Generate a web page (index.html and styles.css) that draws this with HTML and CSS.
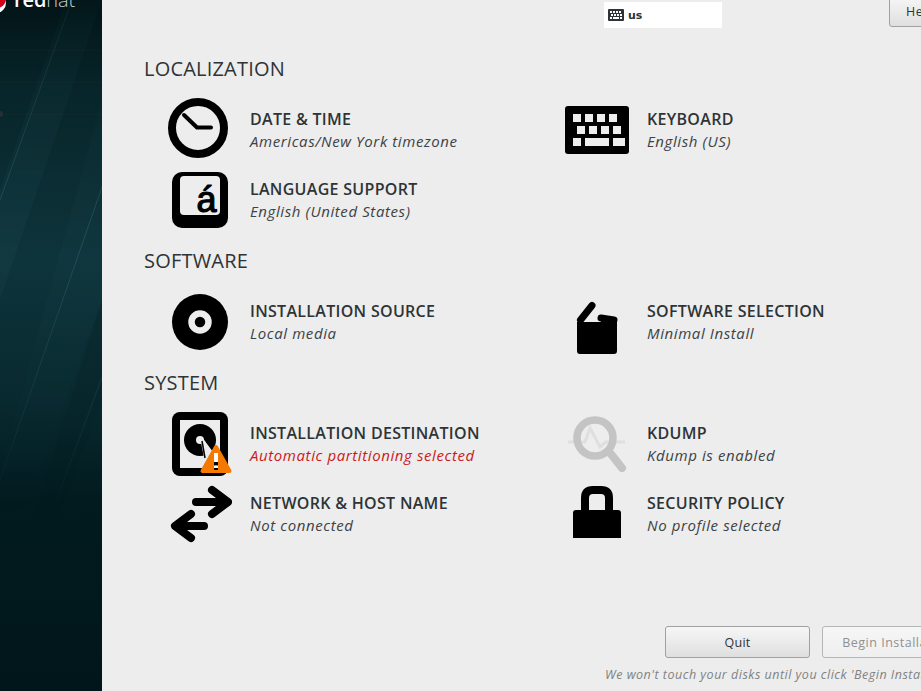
FILE: index.html
```html
<!DOCTYPE html>
<html lang="en">
<head>
<meta charset="utf-8">
<title>Installation Summary</title>
<link rel="stylesheet" href="styles.css">
</head>
<body>
<div class="app">
  <aside class="sidebar">
    <svg class="sidebar-art" width="102" height="691" viewBox="0 0 102 691">
      <defs>
        <linearGradient id="fade" x1="0" y1="0" x2="0" y2="1">
          <stop offset="0" stop-color="#fff" stop-opacity="0.35"/>
          <stop offset="0.35" stop-color="#fff" stop-opacity="1"/>
          <stop offset="0.75" stop-color="#fff" stop-opacity="0"/>
        </linearGradient>
        <mask id="fm"><rect width="102" height="691" fill="url(#fade)"/></mask>
      </defs>
      <g mask="url(#fm)">
        <polygon points="102,0 66,0 0,190 0,300" fill="#2a5a62" opacity="0.14"/>
        <polygon points="102,100 102,300 30,500 0,520 0,470" fill="#2a5a62" opacity="0.09"/>
        <polygon points="102,300 102,400 50,540 20,560" fill="#000" opacity="0.12"/>
        <line x1="72" y1="0" x2="0" y2="200" stroke="#2f6a74" stroke-opacity=".5"/>
        <line x1="102" y1="187" x2="0" y2="480" stroke="#2f6a74" stroke-opacity=".5"/>
        <line x1="102" y1="377" x2="40" y2="545" stroke="#2f6a74" stroke-opacity=".5"/>
        <line x1="102" y1="475" x2="80" y2="535" stroke="#2f6a74" stroke-opacity=".4"/>
      </g>
      <g stroke="#5a3f3f" stroke-opacity=".1">
        <line x1="0" y1="50.500" x2="102" y2="50.500"/>
        <line x1="0" y1="82.500" x2="102" y2="82.500"/>
        <line x1="0" y1="114.500" x2="102" y2="114.500"/>
      </g>
      <circle cx="0" cy="114" r="3" fill="#5a4a4a" opacity=".3"/>
      <circle cx="-4" cy="3" r="10" fill="#fff"/>
      <circle cx="-3" cy="-1" r="9" fill="#d4001a"/>
    </svg>
    <div class="brand"><b class="brand-red">red</b><span class="brand-hat">hat</span></div>
  </aside>

  <main class="main">
    <header class="topbar">
      <div class="layout-indicator">
        <svg class="layout-icon" width="16" height="12" viewBox="0 0 16 12">
          <rect width="16" height="12" rx="1" fill="#2e3436"/>
          <g fill="#fff"><rect x="2" y="2" width="2" height="2"/><rect x="5" y="2" width="2" height="2"/><rect x="8" y="2" width="2" height="2"/><rect x="11" y="2" width="2" height="2"/><rect x="3" y="5" width="2" height="2"/><rect x="6" y="5" width="2" height="2"/><rect x="9" y="5" width="2" height="2"/><rect x="12" y="5" width="2" height="2"/><rect x="2" y="8" width="2" height="2"/><rect x="5" y="8" width="6" height="2"/><rect x="12" y="8" width="2" height="2"/></g>
        </svg>
        <span>us</span>
      </div>
      <button class="btn help-btn">Help!</button>
    </header>

    <section>
      <h2 class="section-title">LOCALIZATION</h2>
      <div class="spokes">
        <div class="spoke">
          <svg class="icon" viewBox="0 0 64 64"><circle cx="30" cy="30" r="26" fill="none" stroke="#000" stroke-width="8"/><path d="M16 17 29 29.500H43" fill="none" stroke="#000" stroke-width="4" stroke-linecap="round" stroke-linejoin="round"/></svg>
          <div class="spoke-text"><div class="spoke-title">DATE &amp; TIME</div><div class="spoke-status">Americas/New York timezone</div></div>
        </div>
        <div class="spoke">
          <svg class="icon" viewBox="0 0 64 64"><rect x="0" y="8" width="64" height="48" rx="3" fill="#000"/><g fill="#ededed"><rect x="8" y="16" width="8" height="8"/><rect x="20" y="16" width="8" height="8"/><rect x="32" y="16" width="8" height="8"/><rect x="44" y="16" width="8" height="8"/><rect x="12" y="28" width="8" height="8"/><rect x="24" y="28" width="8" height="8"/><rect x="36" y="28" width="8" height="8"/><rect x="48" y="28" width="8" height="8"/><rect x="8" y="40" width="8" height="8"/><rect x="20" y="40" width="24" height="8"/><rect x="48" y="40" width="12" height="8"/></g></svg>
          <div class="spoke-text"><div class="spoke-title">KEYBOARD</div><div class="spoke-status">English (US)</div></div>
        </div>
        <div class="spoke">
          <svg class="icon" viewBox="0 0 64 64"><rect x="4" y="4" width="56" height="56" rx="10" fill="#000"/><rect x="12" y="8" width="40" height="39" rx="4" fill="#ededed"/><text class="glyph" x="38.500" y="44" text-anchor="middle">á</text></svg>
          <div class="spoke-text"><div class="spoke-title">LANGUAGE SUPPORT</div><div class="spoke-status">English (United States)</div></div>
        </div>
      </div>
    </section>

    <section>
      <h2 class="section-title">SOFTWARE</h2>
      <div class="spokes">
        <div class="spoke">
          <svg class="icon" viewBox="0 0 64 64"><circle cx="32" cy="32" r="28" fill="#000"/><circle cx="32" cy="32" r="8.500" fill="none" stroke="#ededed" stroke-width="6.500"/></svg>
          <div class="spoke-text"><div class="spoke-title">INSTALLATION SOURCE</div><div class="spoke-status">Local media</div></div>
        </div>
        <div class="spoke">
          <svg class="icon" viewBox="0 0 64 64"><path d="M12 32H36V27L50 28Q52 28.500 52 31V61Q52 64 49 64H15Q12 64 12 61Z" fill="#000"/><path d="M15.500 30 27 15.500" fill="none" stroke="#000" stroke-width="7" stroke-linecap="round"/><path d="M36 28 49 30" fill="none" stroke="#000" stroke-width="7" stroke-linecap="round"/></svg>
          <div class="spoke-text"><div class="spoke-title">SOFTWARE SELECTION</div><div class="spoke-status">Minimal Install</div></div>
        </div>
      </div>
    </section>

    <section>
      <h2 class="section-title">SYSTEM</h2>
      <div class="spokes">
        <div class="spoke">
          <svg class="icon" viewBox="0 0 64 64">
            <rect x="4" y="0" width="56" height="64" rx="8" fill="#000"/>
            <rect x="12" y="8" width="40" height="48" fill="#ededed"/>
            <circle cx="32" cy="28" r="16" fill="#000"/>
            <path d="M32 25 36 46 45 40 34 25Z" fill="#ededed"/>
            <circle cx="32" cy="28" r="4" fill="#ededed"/>
            <path d="M34 29 37 46" stroke="#000" stroke-width="1.500"/>
            <path d="M48 35 34.500 59H61.500Z" fill="#f57900" stroke="#f57900" stroke-width="4" stroke-linejoin="round"/>
            <rect x="46" y="41" width="4" height="9" fill="#fff"/>
            <rect x="46" y="50" width="4" height="3" fill="#000"/>
            <rect x="46" y="54" width="4" height="2" fill="#fff"/>
            <rect x="46" y="56" width="4" height="2" fill="#000"/>
          </svg>
          <div class="spoke-text"><div class="spoke-title">INSTALLATION DESTINATION</div><div class="spoke-status warn">Automatic partitioning selected</div></div>
        </div>
        <div class="spoke">
          <svg class="icon" viewBox="0 0 64 64"><path d="M3 30H20L25 16 35 35 41 30H60" fill="none" stroke="#dfdfdf" stroke-width="3"/><circle cx="30" cy="26" r="18" fill="none" stroke="#c4c4c4" stroke-width="7.500"/><path d="M46 42 57 56" fill="none" stroke="#c4c4c4" stroke-width="8" stroke-linecap="round"/></svg>
          <div class="spoke-text"><div class="spoke-title">KDUMP</div><div class="spoke-status">Kdump is enabled</div></div>
        </div>
        <div class="spoke">
          <svg class="icon" viewBox="0 0 64 64"><g fill="none" stroke="#000" stroke-width="8" stroke-linecap="round" stroke-linejoin="round"><path d="M28 20H59"/><path d="M44 8 60 20 44 32"/><path d="M36 44H9"/><path d="M23 32 7 44 23 56"/></g></svg>
          <div class="spoke-text"><div class="spoke-title">NETWORK &amp; HOST NAME</div><div class="spoke-status">Not connected</div></div>
        </div>
        <div class="spoke">
          <svg class="icon" viewBox="0 0 64 64"><path d="M20 30V16Q20 8 28 8H36Q44 8 44 16V30" fill="none" stroke="#000" stroke-width="8"/><path d="M11 28H53Q56 28 56 31V56H8V31Q8 28 11 28Z" fill="#000"/></svg>
          <div class="spoke-text"><div class="spoke-title">SECURITY POLICY</div><div class="spoke-status">No profile selected</div></div>
        </div>
      </div>
    </section>

    <footer class="footer">
      <div class="actions">
        <button class="btn quit-btn">Quit</button>
        <button class="btn begin-btn" disabled>Begin Installation</button>
      </div>
      <p class="note">We won't touch your disks until you click 'Begin Installation'.</p>
    </footer>
  </main>
</div>
</body>
</html>
```

FILE: styles.css
```css
* { box-sizing: border-box; }

html, body {
  margin: 0;
  height: 691px;
  overflow: hidden;
  background: #ededed;
}

.app {
  display: flex;
  width: 921px;
  height: 691px;
  overflow: hidden;
  font-family: "Open Sans", "Noto Sans", sans-serif;
  color: #2e3436;
}

.sidebar {
  flex: 0 0 102px;
  position: relative;
  overflow: hidden;
  background: linear-gradient(180deg, #021417 0, #07252a 90px, #0e343b 260px, #08292f 400px, #021b1f 500px, #01161a 691px);
}

.sidebar-art { position: absolute; left: 0; top: 0; }

.brand {
  position: absolute;
  left: 14px;
  top: -20px;
  font-family: "Open Sans", sans-serif;
  font-size: 20px;
  line-height: 40px;
  letter-spacing: -0.1px;
  white-space: nowrap;
}

.brand-red { font-weight: 600; color: #fff; }
.brand-hat { font-weight: 300; color: #c4cccd; }

.main {
  flex: 1 1 auto;
  min-width: 0;
  display: flex;
  flex-direction: column;
}

.topbar {
  height: 43px;
  display: flex;
  align-items: flex-start;
  padding-left: 502px;
}

.layout-indicator {
  flex: none;
  margin-top: 2px;
  width: 118px;
  height: 26px;
  display: flex;
  align-items: center;
  gap: 4px;
  padding-left: 4px;
  background: #fff;
  font-family: "DejaVu Sans", sans-serif;
  font-size: 11px;
  font-weight: 700;
  color: #2e3436;
}

.layout-icon { flex: none; }

.btn {
  font-family: "Open Sans", sans-serif;
  font-size: 12.500px;
  color: #2e3436;
  border: 1px solid #a1a1a1;
  border-radius: 3px;
  background: linear-gradient(180deg, #f6f6f6, #dfdfdf);
  padding: 0;
}

.help-btn {
  flex: none;
  width: 60px;
  height: 31px;
  margin: -4px 0 0 167px;
  text-align: left;
  padding-left: 16px;
  letter-spacing: .6px;
}

.section-title {
  margin: 0;
  height: 52px;
  padding: 0 0 2px 42px;
  display: flex;
  align-items: center;
  font-size: 20px;
  font-weight: 400;
  letter-spacing: .2px;
  color: #2e3436;
}

.spokes {
  display: grid;
  grid-template-columns: 397px 397px;
  grid-auto-rows: 70px;
  padding-left: 66px;
}

.spoke {
  display: flex;
  align-items: center;
  gap: 18px;
}

.icon { flex: none; width: 64px; height: 64px; }

.glyph {
  font-family: "Liberation Sans", sans-serif;
  font-size: 36px;
  font-weight: 400;
  fill: #000;
  stroke: #000;
  stroke-width: 1.200px;
}

.spoke-text { display: flex; flex-direction: column; gap: 2px; margin-top: -1px; }

.spoke-title {
  font-size: 16px;
  font-weight: 600;
  line-height: 20px;
  letter-spacing: .3px;
  white-space: nowrap;
}

.spoke-status {
  font-size: 15px;
  font-style: italic;
  line-height: 20px;
  letter-spacing: .6px;
  color: #3c4245;
  white-space: nowrap;
}

.spoke-status.warn { color: #cc1a1a; }

.footer {
  margin-top: auto;
  padding: 0 0 8px 503px;
}

.actions {
  display: flex;
  gap: 12px;
  padding-left: 60px;
  width: 700px;
}

.quit-btn { flex: none; width: 145px; height: 32px; letter-spacing: .2px; }

.begin-btn {
  flex: none;
  width: 150px;
  height: 32px;
  white-space: nowrap;
  overflow: hidden;
  background: linear-gradient(180deg, #f6f6f6, #efefef);
  border-color: #b5b5b5;
  color: #8f9192;
  letter-spacing: .5px;
}

.note {
  margin: 9px 0 0;
  width: 500px;
  font-size: 12.500px;
  line-height: 16px;
  font-style: italic;
  color: #7f8283;
  letter-spacing: .5px;
  white-space: nowrap;
}
```
